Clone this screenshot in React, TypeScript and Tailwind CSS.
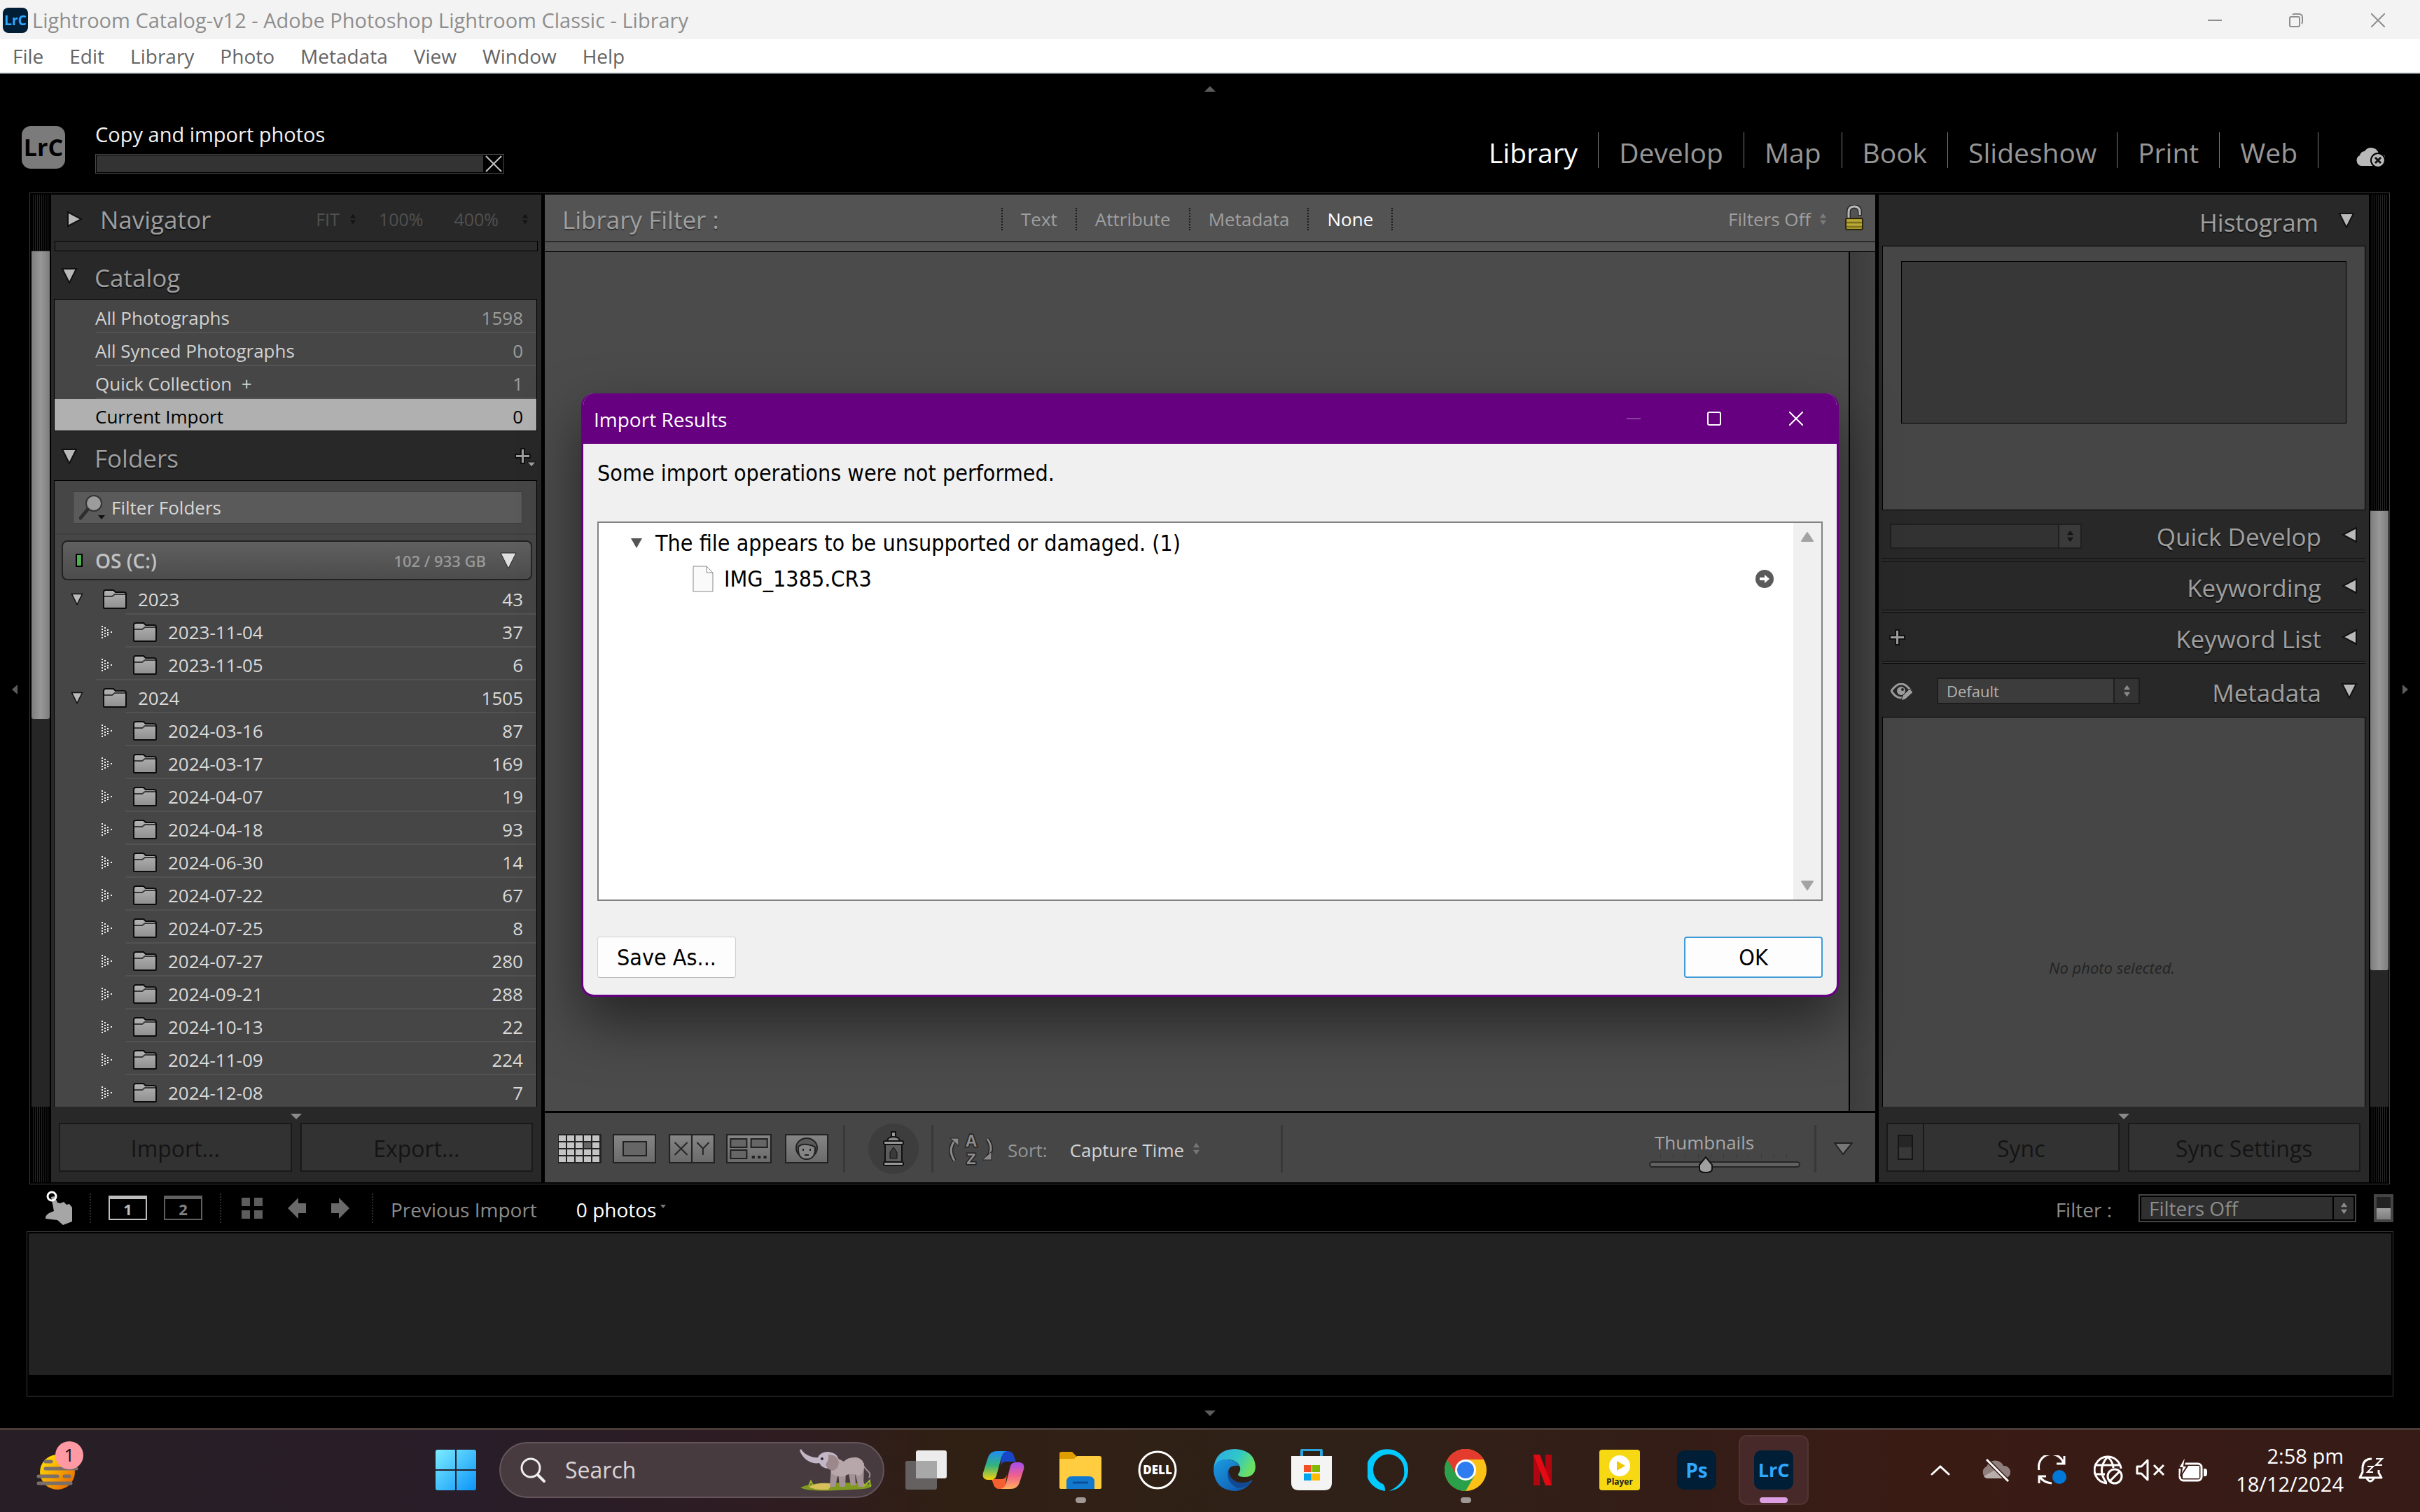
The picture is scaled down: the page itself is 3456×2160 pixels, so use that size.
import type { ReactNode } from "react"

const ridges = "bg-[repeating-linear-gradient(90deg,#000_0px,#000_2px,#242424_2px,#242424_3px)]"

const catalog = [
  { name: "All Photographs", count: "1598" },
  { name: "All Synced Photographs", count: "0" },
  { name: "Quick Collection  +", count: "1" },
  { name: "Current Import", count: "0", active: true },
]

const folders = [
  { name: "2023", count: 43, level: 1 },
  { name: "2023-11-04", count: 37, level: 2 },
  { name: "2023-11-05", count: 6, level: 2, last: true },
  { name: "2024", count: 1505, level: 1 },
  { name: "2024-03-16", count: 87, level: 2 },
  { name: "2024-03-17", count: 169, level: 2 },
  { name: "2024-04-07", count: 19, level: 2 },
  { name: "2024-04-18", count: 93, level: 2 },
  { name: "2024-06-30", count: 14, level: 2 },
  { name: "2024-07-22", count: 67, level: 2 },
  { name: "2024-07-25", count: 8, level: 2 },
  { name: "2024-07-27", count: 280, level: 2 },
  { name: "2024-09-21", count: 288, level: 2 },
  { name: "2024-10-13", count: 22, level: 2 },
  { name: "2024-11-09", count: 224, level: 2 },
  { name: "2024-12-08", count: 7, level: 2 },
]

/* ---------- small glyphs ---------- */

function Tri({ dir = "down", className = "h-6 w-6" }: { dir?: "down" | "left" | "right"; className?: string }) {
  const points = {
    down: "2,2 22,2 12,22",
    left: "22,2 22,22 3,12",
    right: "2,2 2,22 21,12",
  }
  return (
    <svg viewBox="0 0 24 24" className={`shrink-0 ${className}`}>
      <polygon points={points[dir]} fill="#b9b9b9" stroke="#111" strokeWidth="2" />
    </svg>
  )
}

function EdgeArrow({ dir, color = "#5c5c5c" }: { dir: "up" | "down" | "left" | "right"; color?: string }) {
  if (dir === "up" || dir === "down") {
    return (
      <svg viewBox="0 0 16 8" className="h-2 w-4">
        <polygon points={dir === "up" ? "0,8 16,8 8,0" : "0,0 16,0 8,8"} fill={color} />
      </svg>
    )
  }
  return (
    <svg viewBox="0 0 8 14" className="h-[14px] w-2">
      <polygon points={dir === "left" ? "8,0 8,14 0,7" : "0,0 0,14 8,7"} fill={color} />
    </svg>
  )
}

function UpDown({ color = "#8a8a8a", className = "h-5 w-[11px]" }: { color?: string; className?: string }) {
  return (
    <svg viewBox="0 0 12 20" className={`shrink-0 ${className}`}>
      <path d="M6 1l5 7H1zM6 19l5-7H1z" fill={color} />
    </svg>
  )
}

function DottedTri() {
  const dots = [
    [0, 0], [0, 4], [0, 8], [0, 12], [0, 16],
    [4, 2], [4, 6], [4, 10], [4, 14],
    [8, 5], [8, 9], [8, 12],
    [13, 8],
  ]
  return (
    <svg viewBox="0 0 16 18" className="h-[18px] w-4 shrink-0">
      {dots.map(([x, y]) => (
        <rect key={`${x}-${y}`} x={x} y={y} width="2" height="2" fill="#f0f0f0" />
      ))}
    </svg>
  )
}

function FolderIcon() {
  return (
    <svg viewBox="0 0 34 28" className="h-7 w-[34px] shrink-0">
      <defs>
        <linearGradient id="folderFill" x1="0" y1="0" x2="0" y2="1">
          <stop offset="0" stopColor="#b5b5b5" />
          <stop offset="1" stopColor="#8f8f8f" />
        </linearGradient>
      </defs>
      <path d="M1 26V4q0-3 3-3h11l3 3h12q3 0 3 3v19q0 1-1 1H2q-1 0-1-1z" fill="url(#folderFill)" stroke="#0c0c0c" strokeWidth="2" />
      <path d="M2 10h11l4-3h15" fill="none" stroke="#3a3a3a" strokeWidth="2" />
    </svg>
  )
}

function PlusIcon({ menu = false }: { menu?: boolean }) {
  return (
    <svg viewBox="0 0 30 30" className="h-[30px] w-[30px]">
      <path d="M9 1h5v8h8v5h-8v8H9v-8H1V9h8z" fill="#9d9d9d" stroke="#111" strokeWidth="2" />
      {menu && <polygon points="18,20 30,20 24,27" fill="#9d9d9d" stroke="#111" strokeWidth="1" />}
    </svg>
  )
}

function LrcTile({ className }: { className: string }) {
  return (
    <span className={`flex items-center justify-center bg-[#001e36] font-bold text-[#31a8ff] ${className}`}>LrC</span>
  )
}

/* ---------- window chrome ---------- */

function TitleBar() {
  return (
    <div className="flex h-14 shrink-0 items-center bg-[#f3f3f3] pt-0.5 pl-1">
      <LrcTile className="h-9 w-9 rounded-lg text-[19px]" />
      <h1 className="ml-1.5 text-[29px] leading-9 text-[#8e8e8e]">
        Lightroom Catalog-v12 - Adobe Photoshop Lightroom Classic - Library
      </h1>
      <div className="ml-auto flex text-[#8e8e8e]">
        <button aria-label="Minimize" className="flex h-13 w-[117px] items-center justify-center">
          <svg viewBox="0 0 20 20" className="h-5 w-5"><path d="M0 10h20" stroke="currentColor" strokeWidth="2" /></svg>
        </button>
        <button aria-label="Restore" className="flex h-13 w-[115px] items-center justify-center">
          <svg viewBox="0 0 20 20" className="h-5 w-5" fill="none" stroke="currentColor" strokeWidth="2">
            <rect x="1" y="5" width="14" height="14" rx="2" />
            <path d="M5 2q1-1 3-1h6q5 0 5 5v6q0 2-1 3" />
          </svg>
        </button>
        <button aria-label="Close" className="flex h-13 w-[120px] items-center justify-center">
          <svg viewBox="0 0 20 20" className="h-5 w-5"><path d="M0 0l20 20M20 0L0 20" stroke="currentColor" strokeWidth="2" /></svg>
        </button>
      </div>
    </div>
  )
}

function MenuBar() {
  return (
    <nav className="flex h-[49px] shrink-0 items-center gap-[37px] border-b-2 border-[#e4e8ea] bg-white pt-px pl-[18px] text-[28px] leading-9 text-[#646464]">
      {["File", "Edit", "Library", "Photo", "Metadata", "View", "Window", "Help"].map((item) => (
        <button key={item}>{item}</button>
      ))}
    </nav>
  )
}

function Header() {
  return (
    <header className="flex h-[170px] shrink-0 flex-col bg-black pt-[18px]">
      <button aria-label="Hide module picker" className="mx-auto h-2"><EdgeArrow dir="up" /></button>
      <div className="flex flex-1 items-center pt-[14px] pl-[31px]">
        <span className="flex h-[61px] w-[62px] items-center justify-center rounded-[13px] bg-[#7b7b7b] text-[34px] font-bold text-black">
          LrC
        </span>
        <div className="ml-[43px] w-[584px]">
          <div className="text-[29px] leading-10 text-[#f2f2f2]">Copy and import photos</div>
          <div className="mt-2 flex h-7 border border-[#4a4a4a]">
            <div className="m-px flex-1 bg-[#333]" />
            <button aria-label="Cancel import" className="flex w-7 items-center justify-center">
              <svg viewBox="0 0 24 24" className="h-6 w-6"><path d="M1 1l22 22M23 1L1 23" stroke="#c4c4c4" strokeWidth="2" /></svg>
            </button>
          </div>
        </div>
        <nav className="mt-2 mr-[50px] ml-auto flex items-center text-[39px] leading-[50px] text-[#969696]">
          {["Library", "Develop", "Map", "Book", "Slideshow", "Print", "Web"].map((name) => (
            <span key={name} className="flex h-[51px] items-center border-r border-[#7a7a7a] px-[29px]">
              <button className={name === "Library" ? "pt-2 text-white" : "pt-2"}>{name}</button>
            </span>
          ))}
          <button aria-label="Cloud sync" className="mt-5 ml-[53px]">
            <svg viewBox="0 0 42 30" className="h-[30px] w-[42px]">
              <path d="M8 28a8 8 0 0 1-2-15 8 8 0 0 1 7-6 11 11 0 0 1 20 4 8 8 0 0 1 4 17z" fill="#b9b9b9" />
              <circle cx="32" cy="20" r="10" fill="#b9b9b9" stroke="#000" strokeWidth="2" />
              <path d="M28 16l8 8M36 16l-8 8" stroke="#111" strokeWidth="3" />
            </svg>
          </button>
        </nav>
      </div>
    </header>
  )
}

/* ---------- side panels ---------- */

function ScrollRail({ side }: { side: "left" | "right" }) {
  return (
    <div className={side === "left" ? "mr-0.5 flex w-[26px] flex-col" : "ml-0.5 flex w-[26px] flex-col"}>
      <div className={`shrink-0 ${ridges} ${side === "left" ? "h-20" : "h-[451px]"}`} />
      <div className="flex flex-1 flex-col bg-[#262626] pt-px">
        <div className={`rounded-b-[3px] bg-linear-to-r from-[#7d7d7d] via-[#989898] to-[#7d7d7d] ${side === "left" ? "h-[668px]" : "h-[656px]"}`} />
      </div>
      <div className={`h-[108px] shrink-0 ${ridges}`} />
    </div>
  )
}

const panelTitle = "pt-1.5 text-[35px] leading-10 text-[#9f9f9f] [text-shadow:0_2px_1px_#111]"

function LeftHeader({ title, className, children }: { title: string; className: string; children?: ReactNode }) {
  return (
    <div className={`flex shrink-0 items-center pl-[14px] ${className}`}>
      <Tri />
      <h2 className={`ml-6 ${panelTitle}`}>{title}</h2>
      {children}
    </div>
  )
}

function PanelFooter({ children }: { children: ReactNode }) {
  return (
    <div className="flex h-[108px] shrink-0 flex-col pt-[10px] pr-3 pl-[11px]">
      <button aria-label="Show or hide footer" className="mx-auto h-2"><EdgeArrow dir="down" color="#8a8a8a" /></button>
      <div className="mt-[5px] flex h-[70px] gap-3">{children}</div>
    </div>
  )
}

const footerButton =
  "flex flex-1 items-center justify-center border-2 border-[#191919] bg-[#323232] pt-1 text-[32px] leading-10 text-[#141414]"

function LeftPanel() {
  return (
    <aside className="flex w-[700px] shrink-0 flex-col bg-[#282828]">
      <div className="flex h-[66px] shrink-0 items-center pr-[18px] pl-[22px]">
        <Tri dir="right" className="mt-1 h-6 w-6" />
        <h2 className={`ml-6 ${panelTitle}`}>Navigator</h2>
        <div className="ml-auto flex items-center pt-1 text-[25px] leading-8 text-[#505050]">
          <button>FIT</button>
          <UpDown color="#141414" className="mr-8 ml-[14px] h-4 w-[10px]" />
          <button className="mr-11">100%</button>
          <button>400%</button>
          <UpDown color="#141414" className="ml-[33px] h-4 w-[10px]" />
        </div>
      </div>
      <div className="mr-[5px] ml-[5px] h-[15px] shrink-0 border border-black bg-[#2b2b2b]" />

      <LeftHeader title="Catalog" className="h-[68px] pt-0.5" />
      <ul className="mr-1.5 ml-1 shrink-0 border border-black bg-[#464646] pt-px text-[26px] leading-8">
        {catalog.map((item) => (
          <li key={item.name}>
            <button
              className={`flex h-[45px] w-full items-center pt-1 pr-[19px] pl-[58px] whitespace-pre ${
                item.active ? "bg-[#b0b0b0] text-black" : "text-[#d2d2d2]"
              }`}
            >
              {item.name}
              <span className={item.active ? "ml-auto" : "ml-auto text-[#9c9c9c]"}>{item.count}</span>
            </button>
            {!item.active && <div className="ml-[59px] h-0.5 bg-[#525252]" />}
          </li>
        ))}
      </ul>

      <LeftHeader title="Folders" className="h-[70px] pt-0.5">
        <button aria-label="Add folder" className="mr-2 ml-auto pt-1.5"><PlusIcon menu /></button>
      </LeftHeader>
      <div className="mr-1.5 ml-1 min-h-0 flex-1 overflow-hidden border border-b-0 border-black bg-[#464646] text-[26px] leading-8">
        <label className="mt-[15px] mr-5 ml-[26px] flex h-[46px] items-center border border-[#3c3c3c] bg-[#5a5a5a] pl-2">
          <svg viewBox="0 0 38 36" className="h-9 w-[38px] shrink-0">
            <path d="M2 33L12 21" stroke="#2e2e2e" strokeWidth="5" strokeLinecap="round" />
            <circle cx="21" cy="12" r="11" fill="#9c9c9c" stroke="#333" strokeWidth="2" />
            <polygon points="27,29 37,29 32,35" fill="#111" />
          </svg>
          <input
            aria-label="Filter Folders"
            placeholder="Filter Folders"
            className="ml-2 min-w-0 flex-1 bg-transparent outline-none placeholder:text-[#d6d6d6]"
          />
        </label>
        <div className="mt-[14px] h-0.5 bg-[#3e3e3e]" />
        <button className="mt-2 mr-[7px] ml-[10px] flex h-[57px] w-[672px] items-center rounded-lg border-2 border-[#222] bg-linear-to-b from-[#606060] to-[#4c4c4c] pr-5 pl-[18px]">
          <span className="h-[19px] w-[10px] border-2 border-black bg-[#4caf50]" />
          <span className="ml-[18px] text-[28px] font-semibold text-[#c2c2c2]">OS (C:)</span>
          <span className="ml-auto text-[22px] font-semibold text-[#989898]">102 / 933 GB</span>
          <svg viewBox="0 0 24 24" className="ml-5 h-6 w-6"><polygon points="1,1 23,1 12,23" fill="#dedede" stroke="#222" strokeWidth="1" /></svg>
        </button>
        <ul className="mt-0.5 text-[#dadada]">
          {folders.map((folder) => (
            <li key={folder.name}>
              <button
                className={`flex h-[45px] w-full items-center pt-1 pr-[19px] ${folder.level === 1 ? "pl-[23px]" : "pl-[67px]"}`}
              >
                {folder.level === 1 ? <Tri className="h-5 w-[18px]" /> : <DottedTri />}
                <span className={folder.level === 1 ? "ml-7 flex" : "ml-[29px] flex"}><FolderIcon /></span>
                <span className="ml-4">{folder.name}</span>
                <span className="ml-auto">{folder.count}</span>
              </button>
              <div className={`h-0.5 bg-[#525252] ${folder.last ? "ml-[59px]" : "ml-[101px]"}`} />
            </li>
          ))}
        </ul>
      </div>
      <PanelFooter>
        <button className={footerButton}>Import...</button>
        <button className={footerButton}>Export...</button>
      </PanelFooter>
    </aside>
  )
}

function RightHeader({
  title,
  dir = "left",
  className,
  children,
}: {
  title: string
  dir?: "left" | "down"
  className: string
  children?: ReactNode
}) {
  return (
    <div className={`flex shrink-0 items-center ${className}`}>
      {children}
      <h2 className={`ml-auto ${panelTitle}`}>{title}</h2>
      <Tri dir={dir} className="ml-7 h-6 w-6" />
    </div>
  )
}

const rule = <div className="mx-[5px] h-1 shrink-0 border-y border-black bg-[#333]" />

function RightPanel() {
  return (
    <aside className="flex w-[700px] shrink-0 flex-col bg-[#282828]">
      <RightHeader title="Histogram" dir="down" className="h-[73px] pr-5" />
      <div className="mx-[5px] h-[378px] shrink-0 border border-black bg-[#464646] px-[26px] pt-[21px]">
        <div className="h-[232px] border border-black bg-[#373737]" />
      </div>
      <RightHeader title="Quick Develop" className="h-[69px] pr-4 pl-4">
        <div className="relative mt-1 h-9 w-[274px]">
          <select
            aria-label="Saved preset"
            className="h-full w-full appearance-none border-2 border-[#1f1f1f] bg-[#323232]"
          />
          <span className="absolute inset-y-0.5 right-0.5 flex w-8 items-center justify-center border-l-2 border-[#1f1f1f] bg-[#3a3a3a]">
            <UpDown color="#151515" />
          </span>
        </div>
      </RightHeader>
      {rule}
      <RightHeader title="Keywording" className="h-[69px] pr-4" />
      {rule}
      <RightHeader title="Keyword List" className="h-[69px] pr-4 pl-[15px]">
        <button aria-label="Add keyword" className="pt-2"><PlusIcon /></button>
      </RightHeader>
      {rule}
      <RightHeader title="Metadata" dir="down" className="h-[76px] pt-0.5 pr-4 pl-[17px]">
        <button aria-label="Customize metadata" className="flex pt-1">
          <svg viewBox="0 0 32 26" className="h-[26px] w-8">
            <path d="M1 11Q8 1 15 1t14 10q-6 10-14 10T1 11z" fill="none" stroke="#9d9d9d" strokeWidth="3" />
            <circle cx="15" cy="11" r="6" fill="#9d9d9d" />
            <circle cx="17" cy="9" r="2" fill="#282828" />
            <path d="M15 25l2-7L27 8l5 5-11 10z" fill="#9d9d9d" stroke="#222" strokeWidth="1" />
          </svg>
        </button>
        <div className="relative ml-[34px] h-[38px] w-[290px]">
          <select
            aria-label="Metadata set"
            className="h-full w-full appearance-none border-2 border-[#1c1c1c] bg-[#3c3c3c] pl-3 text-[22px] leading-7 text-[#b2b2b2]"
          >
            <option>Default</option>
          </select>
          <span className="pointer-events-none absolute inset-y-0.5 right-0.5 flex w-9 items-center justify-center border-l-2 border-[#1f1f1f] bg-[#333]">
            <UpDown />
          </span>
        </div>
      </RightHeader>
      <div className="mx-[5px] flex min-h-0 flex-1 flex-col items-center border border-b-0 border-black bg-[#464646] pt-[343px]">
        <p className="mr-[34px] text-[22px] leading-7 text-[#232323] italic">No photo selected.</p>
      </div>
      <PanelFooter>
        <div className="flex flex-1 border-2 border-[#191919] bg-[#323232]">
          <button aria-label="Auto sync" className="flex w-[52px] items-center justify-center border-r-2 border-[#191919]">
            <span className="flex h-9 w-[22px] flex-col justify-end border-2 border-[#161616] bg-[#262626]">
              <span className="h-4 bg-[#383838]" />
            </span>
          </button>
          <button className="flex-1 pt-1 text-[32px] leading-10 text-[#141414]">Sync</button>
        </div>
        <button className={footerButton}>Sync Settings</button>
      </PanelFooter>
    </aside>
  )
}

/* ---------- centre ---------- */

function FilterBar() {
  const tabs = ["Text", "Attribute", "Metadata", "None"]
  return (
    <div className="shrink-0">
      <div className="flex h-[67px] items-center bg-[#535353] pt-0.5 text-[26px] leading-8 text-[#9f9f9f] [text-shadow:0_2px_1px_#333]">
        <h2 className="w-[652px] pt-0.5 pl-[25px] text-[35px] leading-10">Library Filter :</h2>
        <div className="flex border-l-2 border-dotted border-[#1a1a1a]">
          {tabs.map((tab) => (
            <button
              key={tab}
              className={`border-r-2 border-dotted border-[#1a1a1a] px-[26px] ${tab === "None" ? "text-white" : ""}`}
            >
              {tab}
            </button>
          ))}
        </div>
        <button className="ml-auto">Filters Off</button>
        <UpDown color="#7b7b7b" className="ml-3 h-5 w-[11px]" />
        <button aria-label="Lock filters" className="mr-4 ml-[25px] flex pb-1">
          <svg viewBox="0 0 28 36" className="h-9 w-7">
            <path d="M6 20V10q0-8 8-8t8 8v5" fill="none" stroke="#2b2b2b" strokeWidth="6" />
            <path d="M6 20V10q0-8 8-8t8 8v4" fill="none" stroke="#b9b9b9" strokeWidth="3" />
            <rect x="2" y="19" width="24" height="16" rx="2" fill="#a8982c" stroke="#2e2808" strokeWidth="2" />
            <path d="M3 22h22M3 28h22" stroke="#b9aa3c" strokeWidth="2" />
            <path d="M3 25h22M3 31h22" stroke="#7f711a" strokeWidth="2" />
          </svg>
        </button>
      </div>
      <div className="h-[15px] border-y border-black bg-[#535353]" />
    </div>
  )
}

function ViewButton({ label, className, children }: { label: string; className: string; children: ReactNode }) {
  return (
    <button aria-label={label} className={`flex ${className}`}>
      <svg viewBox="0 0 62 42" preserveAspectRatio="none" className="h-[42px] w-full">
        <defs>
          <linearGradient id="viewFill" x1="0" y1="0" x2="0" y2="1">
            <stop offset="0" stopColor="#868686" />
            <stop offset="1" stopColor="#6a6a6a" />
          </linearGradient>
        </defs>
        {children}
      </svg>
    </button>
  )
}

function Toolbar() {
  const frame = <rect x="1" y="1" width="60" height="40" fill="url(#viewFill)" stroke="#222" strokeWidth="2" />
  return (
    <div className="flex h-[102px] shrink-0 items-center border-t-[3px] border-black bg-[#464646] pt-0.5 pl-[19px] text-[26px] leading-8">
      <ViewButton label="Grid view" className="w-[62px]">
        <rect width="62" height="42" fill="#222" />
        {[0, 1, 2, 3].map((r) =>
          [0, 1, 2, 3, 4].map((c) => (
            <rect key={`${r}-${c}`} x={1 + c * 12} y={2 + r * 10} width="10" height="8" fill={r === 1 && c === 3 ? "#666" : "#c4c4c4"} />
          )),
        )}
      </ViewButton>
      <ViewButton label="Loupe view" className="ml-4 w-[62px]">
        {frame}
        <rect x="15" y="11" width="33" height="20" fill="#666" stroke="#222" strokeWidth="2" />
      </ViewButton>
      <ViewButton label="Compare view" className="ml-[18px] w-[66px]">
        {frame}
        <path d="M31 1v40" stroke="#222" strokeWidth="2" />
        <path d="M8 12l17 18M25 12L8 30M38 12l8 9 8-9M46 21v9" stroke="#2a2a2a" strokeWidth="2" fill="none" />
      </ViewButton>
      <ViewButton label="Survey view" className="ml-4 w-[65px]">
        {frame}
        <g fill="#666" stroke="#222" strokeWidth="2">
          <rect x="6" y="7" width="22" height="12" />
          <rect x="34" y="7" width="22" height="12" />
          <rect x="6" y="23" width="22" height="12" />
        </g>
        <path d="M35 33h4M43 33h4M51 33h4" stroke="#222" strokeWidth="4" />
      </ViewButton>
      <ViewButton label="People view" className="ml-[19px] w-[62px]">
        {frame}
        <ellipse cx="31" cy="20" rx="15" ry="14" fill="#5a5a5a" stroke="#222" strokeWidth="2" />
        <path d="M19 19q3-5 12-4t12 4q1 17-12 17T19 19z" fill="#858585" stroke="#222" strokeWidth="2" />
        <path d="M26 21v3M36 21v3M28 30h6" stroke="#222" strokeWidth="2" />
      </ViewButton>
      <div className="ml-[21px] h-[68px] w-[3px] bg-[#383838]" />
      <button aria-label="Painter" className="ml-[33px] flex h-[72px] w-[72px] items-center justify-center rounded-full bg-[#3d3d3d]">
        <svg viewBox="0 0 30 50" className="h-[50px] w-[30px]" stroke="#111" strokeWidth="2">
          <path d="M12 1h6v8h-6z" fill="#999" />
          <path d="M6 15q0-7 9-7t9 7z" fill="#8a8a8a" />
          <rect x="3" y="18" width="24" height="28" fill="#5c5c5c" />
          <rect x="1" y="14" width="28" height="5" rx="2" fill="#9a9a9a" />
          <rect x="1" y="44" width="28" height="5" rx="2" fill="#9a9a9a" />
          <path d="M15 23l5 7v9H10v-9z" fill="#3a3a3a" strokeWidth="1" />
        </svg>
      </button>
      <div className="ml-[18px] h-[68px] w-[3px] bg-[#383838]" />
      <button aria-label="Sort direction" className="ml-[22px] flex">
        <svg viewBox="0 0 64 46" className="h-[46px] w-16 overflow-visible">
          <g fill="none" stroke="#222" strokeWidth="6"><path d="M8 40Q-2 24 9 11M55 9q10 14 0 27" /></g>
          <g fill="none" stroke="#8a8a8a" strokeWidth="3"><path d="M8 40Q-2 24 9 11M55 9q10 14 0 27" /></g>
          <path d="M2 8h12v11zM48 39h13V27z" fill="#8a8a8a" stroke="#222" strokeWidth="1" />
          <g
            fill="#8f8f8f"
            stroke="#222"
            strokeWidth="3"
            paintOrder="stroke"
            fontFamily="Liberation Sans, sans-serif"
            fontWeight="700"
            textAnchor="middle"
          >
            <text x="32" y="20" fontSize="23">A</text>
            <text x="32" y="45" fontSize="22">Z</text>
          </g>
        </svg>
      </button>
      <label htmlFor="sort" className="ml-5 pt-1 text-[#969696]">Sort:</label>
      <select id="sort" className="ml-8 w-[165px] appearance-none bg-transparent pt-1 text-[#d4d4d4]">
        <option>Capture Time</option>
      </select>
      <UpDown color="#777" className="ml-[10px] h-5 w-[11px]" />
      <div className="ml-[115px] h-[68px] w-[3px] bg-[#383838]" />
      <div className="mt-2 ml-auto w-[216px]">
        <label htmlFor="thumb-size" className="block pl-2 leading-8 text-[#a8a8a8]">Thumbnails</label>
        <div className="relative h-[26px]">
          <div className="mx-4 h-[7px] bg-[repeating-linear-gradient(90deg,#3a3a3a_0px,#3a3a3a_1px,transparent_1px,transparent_18px)]" />
          <div className="mt-1 h-[9px] rounded-full border-2 border-[#262626] bg-[#606060]" />
          <svg viewBox="0 0 22 24" className="absolute top-1 left-[70px] h-6 w-[22px]">
            <path d="M11 1l9 11v6q0 5-9 5t-9-5v-6z" fill="#a0a0a0" stroke="#111" strokeWidth="2" />
          </svg>
          <input id="thumb-size" type="range" defaultValue={37} className="absolute inset-0 w-full opacity-0" />
        </div>
      </div>
      <div className="ml-5 h-[68px] w-[3px] bg-[#383838]" />
      <button aria-label="Toolbar options" className="mr-8 ml-[25px]">
        <svg viewBox="0 0 27 18" className="h-[18px] w-[27px]"><polygon points="1,1 26,1 13,17" fill="#777" stroke="#222" strokeWidth="2" /></svg>
      </button>
    </div>
  )
}

function Workspace() {
  return (
    <main className="flex min-h-0 flex-1 bg-black">
      <button aria-label="Hide left panel" className="flex w-[42px] shrink-0 items-center justify-center pt-0.5"><EdgeArrow dir="left" /></button>
      <div className="flex min-w-0 flex-1 border border-[#3a3a3a] py-0.5 pr-px pl-0.5">
        <ScrollRail side="left" />
        <LeftPanel />
        <section className="mx-[5px] flex min-w-0 flex-1 flex-col">
          <FilterBar />
          <div className="flex min-h-0 flex-1 bg-[#4b4b4b]">
            <div className="ml-auto w-[38px] border-l-2 border-black bg-linear-to-r from-[#3c3c3c] to-[#434343]" />
          </div>
          <Toolbar />
        </section>
        <RightPanel />
        <ScrollRail side="right" />
      </div>
      <button aria-label="Hide right panel" className="flex w-[43px] shrink-0 items-center justify-center pt-0.5"><EdgeArrow dir="right" /></button>
    </main>
  )
}

/* ---------- filmstrip ---------- */

function ScreenButton({ n, className }: { n: string; className: string }) {
  return (
    <button className={`flex h-[35px] w-[55px] items-center justify-center border-2 border-t-[5px] text-[22px] leading-6 font-bold ${className}`}>
      {n}
    </button>
  )
}

function Filmstrip() {
  const divider = "h-[42px] border-l-2 border-dotted border-[#2e2e2e]"
  return (
    <section className="flex shrink-0 flex-col bg-black text-[28px] leading-9 text-[#8c8c8c]">
      <div className="flex h-[67px] items-center pr-[38px] pl-16">
        <svg viewBox="0 0 40 50" className="h-[50px] w-10">
          <path d="M9 9l4 20-7 3q-6 4-5 8l17 2 8 7 13-5V24l-4-5-4 1-4-4-5 2-4-1-4-9z" fill="#a6a6a6" />
          <circle cx="10" cy="8" r="6" fill="none" stroke="#fff" strokeWidth="3" />
        </svg>
        <div className={`ml-6 ${divider}`} />
        <ScreenButton n="1" className="ml-[25px] border-[#bdbdbd] text-[#bdbdbd]" />
        <ScreenButton n="2" className="ml-6 border-[#606060] text-[#808080]" />
        <div className={`ml-[25px] ${divider}`} />
        <button aria-label="Grid" className="ml-[29px]">
          <svg viewBox="0 0 30 30" className="h-[30px] w-[30px]" fill="#5d5d5d">
            <path d="M0 0h12v12H0zM18 0h12v12H18zM0 18h12v12H0zM18 18h12v12H18z" />
          </svg>
        </button>
        <button aria-label="Back" className="ml-9">
          <svg viewBox="0 0 26 30" className="h-[30px] w-[26px]" fill="#6a6a6a"><path d="M0 15L15 0v8h11v14H15v8z" /></svg>
        </button>
        <button aria-label="Forward" className="ml-9">
          <svg viewBox="0 0 26 30" className="h-[30px] w-[26px]" fill="#6a6a6a"><path d="M26 15L11 0v8H0v14h11v8z" /></svg>
        </button>
        <div className={`ml-8 ${divider}`} />
        <span className="ml-[25px] pt-1">Previous Import</span>
        <button className="ml-14 flex items-center gap-1.5 pt-1 text-white">
          0 photos
          <svg viewBox="0 0 8 5" className="mb-2 h-[5px] w-2"><polygon points="0,0 8,0 4,5" fill="#777" /></svg>
        </button>
        <label htmlFor="filter" className="mr-[38px] ml-auto pt-1">Filter :</label>
        <div className="relative h-10 w-[311px]">
          <select
            id="filter"
            className="h-full w-full appearance-none border-2 border-[#454545] bg-[#2f2f2f] pl-[13px] leading-8 outline-2 -outline-offset-4 outline-black"
          >
            <option>Filters Off</option>
          </select>
          <span className="pointer-events-none absolute inset-y-1 right-1 flex w-[30px] items-center justify-center border-l-2 border-black bg-[#2f2f2f]">
            <UpDown />
          </span>
        </div>
        <button aria-label="Filter switch" className="ml-[25px] flex h-10 w-7 flex-col justify-end border-4 border-[#454545] bg-[#222]">
          <span className="block h-4 w-full bg-linear-to-b from-[#a0a0a0] to-[#7d7d7d]" />
        </button>
      </div>
      <div className="mx-[38px] h-[236px] border border-[#3a3a3a] px-0.5 pt-0.5">
        <div className="h-[202px] bg-[#222]" />
      </div>
      <button aria-label="Hide filmstrip" className="mx-auto mt-5 mb-[17px] h-2"><EdgeArrow dir="down" /></button>
    </section>
  )
}

/* ---------- dialog ---------- */

function ImportResults() {
  return (
    <div
      role="dialog"
      aria-labelledby="dialog-title"
      className="flex w-[1796px] flex-col overflow-hidden rounded-[18px] border-[3px] border-t-0 border-[#660080] bg-[#f0f0f0] text-[32px] leading-10 text-black shadow-[0_36px_80px_rgba(0,0,0,0.5)] [font-family:'DejaVu_Sans_Condensed','DejaVu_Sans',sans-serif]"
    >
      <div className="flex h-[72px] items-center bg-[#660080] pl-[15px] text-white">
        <h2 id="dialog-title" className="pt-0.5 text-[28px] leading-9 [font-family:'Open_Sans',sans-serif]">Import Results</h2>
        <div className="ml-auto flex">
          <button aria-label="Minimize" disabled className="flex h-[72px] w-[115px] items-center justify-center text-[#8b3fa0]">
            <svg viewBox="0 0 20 20" className="h-5 w-5"><path d="M0 10h20" stroke="currentColor" strokeWidth="2" /></svg>
          </button>
          <button aria-label="Maximize" className="flex h-[72px] w-[116px] items-center justify-center">
            <svg viewBox="0 0 20 20" className="h-5 w-5"><rect x="1" y="1" width="18" height="18" rx="2" fill="none" stroke="currentColor" strokeWidth="2" /></svg>
          </button>
          <button aria-label="Close" className="flex h-[72px] w-[117px] items-center justify-center">
            <svg viewBox="0 0 20 20" className="h-5 w-5"><path d="M0 0l20 20M20 0L0 20" stroke="currentColor" strokeWidth="2" /></svg>
          </button>
        </div>
      </div>
      <div className="px-5 pt-[22px] pb-6">
        <p>Some import operations were not performed.</p>
        <div className="mt-[49px] flex h-[542px] border-2 border-[#828282] bg-white">
          <ul className="flex-1 pt-[3px]">
            <li className="flex h-[51px] items-center pl-[46px]">
              <svg viewBox="0 0 16 14" className="h-[14px] w-4"><polygon points="0,0 16,0 8,14" fill="#555" /></svg>
              <span className="ml-[19px]">The file appears to be unsupported or damaged. (1)</span>
            </li>
            <li className="flex h-[51px] items-center pr-7 pl-[134px]">
              <svg viewBox="0 0 30 38" className="h-[38px] w-[30px]">
                <path d="M1 1h19l9 9v27H1z" fill="#fafafa" stroke="#888" strokeWidth="1" />
                <path d="M20 1v9h9" fill="none" stroke="#888" strokeWidth="1" />
              </svg>
              <span className="ml-[15px]">IMG_1385.CR3</span>
              <button aria-label="Show in Explorer" className="ml-auto">
                <svg viewBox="0 0 26 26" className="h-[26px] w-[26px]">
                  <circle cx="13" cy="13" r="13" fill="#5a5a5a" />
                  <path d="M6 11h7V7l7 6-7 6v-4H6z" fill="#fff" />
                </svg>
              </button>
            </li>
          </ul>
          <div className="flex w-10 flex-col items-center justify-between bg-[#f0f0f0] py-[13px]">
            <svg viewBox="0 0 20 14" className="h-[14px] w-5"><path d="M10 1l8 12H2z" fill="#a3a3a3" stroke="#a3a3a3" strokeWidth="2" strokeLinejoin="round" /></svg>
            <svg viewBox="0 0 20 14" className="h-[14px] w-5"><path d="M10 13L2 1h16z" fill="#a3a3a3" stroke="#a3a3a3" strokeWidth="2" strokeLinejoin="round" /></svg>
          </div>
        </div>
        <div className="mt-[51px] flex justify-between">
          <button className="h-[59px] w-[198px] rounded-sm border border-[#d0d0d0] border-b-[#b5b5b5] bg-[#fdfdfd]">Save As...</button>
          <button className="h-[59px] w-[198px] rounded-sm border-2 border-[#3f9ad6] bg-[#fdfdfd]">OK</button>
        </div>
      </div>
    </div>
  )
}

/* ---------- taskbar ---------- */

function Elephant() {
  return (
    <svg viewBox="0 0 106 60" className="h-[60px] w-[106px] shrink-0">
      <path d="M2 55q14-7 40-6 34-3 62 2 0 5-12 6t-38 2q-42 2-52-4z" fill="#7f9a1e" />
      <path d="M14 54q16-8 34-4l-6 8q-20 1-28-4z" fill="#d9bf5a" />
      <path d="M14 53l3-7 3 6M86 54l5-8 2 7 8-8 1 9" stroke="#9cba2c" strokeWidth="2" fill="none" />
      {/* tail and legs */}
      <path d="M90 20q4 8 9 12 4 4 1 9" fill="none" stroke="#a08d90" strokeWidth="2" />
      <path d="M46 26l-2 28h8l4-20 2 20h8l1-22zM70 28l4 24h7l-1-18 5 20h7l1-34z" fill="#a59296" />
      {/* body, head and trunk */}
      <path d="M44 10q14 4 20 8 6-7 18-6 11 2 11 14-1 10-8 12-12-5-20 1-12 2-19-5z" fill="#b8a7aa" />
      <path d="M3 0q3 6 12 10 8 3 12 2 4-8 14-8 14 1 16 12-2 10-14 12-10 0-14-8-10 2-19-5Q4 10 1 2z" fill="#c3b6c6" />
      <path d="M42 8q13 0 15 11-1 10-9 12-8-2-10-9 5-6 4-14z" fill="#9c878b" />
      <circle cx="33" cy="14" r="2" fill="#2b2733" />
    </svg>
  )
}

const apps: { name: string; running?: boolean; icon: ReactNode }[] = [
  {
    name: "Task view",
    icon: (
      <svg viewBox="0 0 60 60" className="h-[60px] w-[60px]">
        <rect x="15" y="2" width="44" height="40" rx="3" fill="#ececec" />
        <rect x="0" y="17" width="45" height="41" rx="3" fill="#6b6b6b" fillOpacity="0.88" />
        <rect x="15" y="17" width="30" height="25" fill="#a8a8a8" />
      </svg>
    ),
  },
  {
    name: "Copilot",
    icon: (
      <svg viewBox="0 0 60 60" className="h-[60px] w-[60px]">
        <defs>
          <linearGradient id="copA" x1="0" y1="0" x2="0" y2="1">
            <stop offset="0" stopColor="#1f8df5" /><stop offset="0.5" stopColor="#34b37c" /><stop offset="1" stopColor="#f3d20e" />
          </linearGradient>
          <linearGradient id="copB" x1="0" y1="0" x2="0" y2="1">
            <stop offset="0" stopColor="#a44df0" /><stop offset="0.5" stopColor="#f0608c" /><stop offset="1" stopColor="#ffb05c" />
          </linearGradient>
        </defs>
        <path d="M28 3h8q7 0 9 7l3 8H34q-6 0-8 6z" fill="#1746c8" />
        <path d="M32 57h-8q-6 0-8-6l-3-8h14q6 0 8-6z" fill="#f4602f" />
        <path d="M21 3h14q-6 1-8 9l-7 26q-2 6-8 6H7q-8-1-6-10l7-22q3-9 13-9z" fill="url(#copA)" />
        <path d="M40 57H26q6-1 8-9l6-24q2-5 8-5h5q8 1 6 10l-6 19q-3 9-13 9z" fill="url(#copB)" />
      </svg>
    ),
  },
  {
    name: "File Explorer",
    running: true,
    icon: (
      <svg viewBox="0 0 60 60" className="h-[60px] w-[60px]">
        <path d="M0 7q0-3 3-3h15l6 6v8H0z" fill="#e09d00" />
        <path d="M0 14h21l4-4h32q3 0 3 3v42q0 2-2 2H2q-2 0-2-2z" fill="#ffcd3f" />
        <path d="M10 57V47q0-8 8-8h24q8 0 8 8v10z" fill="#1279cf" />
        <path d="M19 48h22" stroke="#0b4f96" strokeWidth="3" />
      </svg>
    ),
  },
  {
    name: "Dell",
    icon: (
      <svg viewBox="0 0 60 60" className="h-[60px] w-[60px]">
        <circle cx="30" cy="30" r="26" fill="none" stroke="#fff" strokeWidth="3" />
        <text x="30" y="36" fontSize="17" fontWeight="800" textAnchor="middle" fill="#fff">DELL</text>
      </svg>
    ),
  },
  {
    name: "Edge",
    icon: (
      <svg viewBox="0 0 60 60" className="h-[60px] w-[60px]">
        <defs>
          <linearGradient id="edgeTop" x1="0" y1="0" x2="1" y2="0.4">
            <stop offset="0" stopColor="#2fa8e8" /><stop offset="0.6" stopColor="#30c8c8" /><stop offset="1" stopColor="#6be063" />
          </linearGradient>
          <linearGradient id="edgeBody" x1="0" y1="0" x2="1" y2="1">
            <stop offset="0" stopColor="#1b9de2" /><stop offset="1" stopColor="#0f4fa8" />
          </linearGradient>
        </defs>
        <path d="M0 28Q3 0 31 0q28 2 29 26-1 14-16 14-9 0-9-4 4-4 3-10-3-9-15-11Q6 14 0 28z" fill="url(#edgeTop)" />
        <path d="M0 30q2-15 18-15 14 0 19 9-16-2-16 10 1 14 18 15 8 0 17-5Q47 60 29 60 2 58 0 30z" fill="url(#edgeBody)" />
        <path d="M21 30q-4 18 14 26 12 0 20-10-30 8-34-16z" fill="#114a93" />
      </svg>
    ),
  },
  {
    name: "Microsoft Store",
    icon: (
      <svg viewBox="0 0 60 60" className="h-[60px] w-[60px]">
        <path d="M16 14V3q0-2 2-2h24q2 0 2 2v11" fill="none" stroke="#2aa4dd" strokeWidth="4" />
        <path d="M1 10h58v38q0 11-11 11H12Q1 59 1 48z" fill="#f4f4f4" />
        <path d="M19 23h11v10H19z" fill="#f25022" /><path d="M31 23h11v10H31z" fill="#7fba00" />
        <path d="M19 35h11v10H19z" fill="#00a4ef" /><path d="M31 35h11v10H31z" fill="#ffb900" />
      </svg>
    ),
  },
  {
    name: "Alexa",
    icon: (
      <svg viewBox="0 0 60 60" className="h-[60px] w-[60px]">
        <path d="M25 60A30 30 0 1 1 31 60q24-12 21-30A22 22 0 1 0 22 50q3 2 3 10z" fill="#00caff" />
      </svg>
    ),
  },
  {
    name: "Chrome",
    running: true,
    icon: (
      <svg viewBox="0 0 60 60" className="h-[60px] w-[60px]">
        <circle cx="30" cy="30" r="30" fill="#fbc116" />
        <path d="M30 30L4 15A30 30 0 0 0 30 60l13-22z" fill="#2aa04a" />
        <path d="M4 15a30 30 0 0 1 52 0H30L17 37z" fill="#e33b2e" />
        <circle cx="30" cy="30" r="15" fill="#fff" />
        <circle cx="30" cy="30" r="12" fill="#2f7cf0" />
      </svg>
    ),
  },
  {
    name: "Netflix",
    icon: (
      <svg viewBox="0 0 26 44" className="h-11 w-[26px]">
        <path d="M0 0h9v44H0zM17 0h9v44h-9z" fill="#b1060f" />
        <path d="M0 0h9l17 44h-9z" fill="#e50914" />
      </svg>
    ),
  },
  {
    name: "Player",
    icon: (
      <span className="flex h-[58px] w-[58px] flex-col items-center rounded-sm bg-[#f6d912] pt-2">
        <svg viewBox="0 0 30 30" className="h-[30px] w-[30px]">
          <circle cx="15" cy="15" r="15" fill="#fff" />
          <path d="M11 8l12 7-12 7z" fill="#f0c800" />
        </svg>
        <span className="text-[12px] leading-4 font-bold text-[#222]">Player</span>
      </span>
    ),
  },
  {
    name: "Photoshop",
    icon: (
      <span className="flex h-14 w-14 items-center justify-center rounded-[10px] bg-[#001e36] text-[28px] font-bold text-[#31a8ff]">
        Ps
      </span>
    ),
  },
]

function Taskbar() {
  return (
    <footer className="flex h-[120px] shrink-0 items-center border-t-[3px] border-[#4a3c38] bg-[linear-gradient(90deg,#281f26_0%,#281d28_20%,#2f1c21_33%,#301f13_39%,#2f2118_55%,#341d17_68%,#3a1b14_80%,#361b17_100%)] pb-[3px] text-white">
      <button aria-label="Weather" className="flex w-[606px] shrink-0 pl-[51px]">
        <svg viewBox="0 0 72 72" className="mb-3 h-[72px] w-[72px]">
          <defs>
            <linearGradient id="sun" x1="0" y1="0" x2="1" y2="1">
              <stop offset="0.2" stopColor="#ffd000" /><stop offset="1" stopColor="#e65a00" />
            </linearGradient>
          </defs>
          <circle cx="31" cy="45" r="25" fill="url(#sun)" />
          <g stroke="#7a6f6a" strokeWidth="5" strokeLinecap="round">
            <path d="M14 30h8M14 40h44M4 51h27M41 51h7M4 61h46" />
          </g>
          <circle cx="48" cy="21" r="20" fill="#ff99a4" />
          <text x="48" y="30" fontSize="26" textAnchor="middle" fill="#111">1</text>
        </svg>
      </button>
      <button aria-label="Start" className="flex w-[90px] shrink-0 justify-center">
        <svg viewBox="0 0 58 58" className="h-[58px] w-[58px]">
          <defs>
            <linearGradient id="win" x1="0" y1="0" x2="1" y2="1">
              <stop offset="0" stopColor="#7cecff" /><stop offset="1" stopColor="#0a94f8" />
            </linearGradient>
          </defs>
          <path d="M3 0h25v28H0V3q0-3 3-3zM30 0h25q3 0 3 3v25H30zM0 30h28v28H3q-3 0-3-3zM30 30h28v25q0 3-3 3H30z" fill="url(#win)" />
        </svg>
      </button>
      <label className="mr-[5px] ml-[17px] flex h-20 w-[550px] shrink-0 items-center rounded-full border-2 border-[#63555a] bg-[#483b40] pr-[14px] pl-[27px]">
        <svg viewBox="0 0 38 38" className="h-[38px] w-[38px] shrink-0" fill="none" stroke="#eee" strokeLinecap="round">
          <circle cx="16" cy="16" r="13" strokeWidth="3" />
          <path d="M26 26l9 9" strokeWidth="4" />
        </svg>
        <input aria-label="Search" placeholder="Search" className="ml-[27px] min-w-0 flex-1 bg-transparent text-[32px] leading-10 outline-none placeholder:text-[#d9d3d5]" />
        <Elephant />
      </label>
      {apps.map((app) => (
        <button key={app.name} aria-label={app.name} className="relative flex h-full w-[110px] shrink-0 items-center justify-center">
          {app.icon}
          {app.running && <span className="absolute bottom-[10px] h-2 w-[15px] rounded-full bg-[#a19795]" />}
        </button>
      ))}
      <button aria-label="Lightroom Classic" className="relative mx-[5px] flex h-[100px] w-[100px] shrink-0 items-center justify-center rounded-xl border-2 border-[#53332f] bg-[#48292a]">
        <LrcTile className="h-14 w-14 rounded-[10px] text-[27px]" />
        <span className="absolute bottom-px h-2 w-10 rounded-full bg-[#dd9fe2]" />
      </button>

      <div className="mr-[51px] ml-auto flex items-center text-[29px] leading-10">
        <button aria-label="Hidden icons" className="flex w-20 justify-center">
          <svg viewBox="0 0 28 16" className="h-4 w-7"><path d="M2 14L14 3l12 11" fill="none" stroke="#fff" strokeWidth="3" strokeLinecap="round" /></svg>
        </button>
        <button aria-label="OneDrive" className="flex w-20 justify-center">
          <svg viewBox="0 0 42 34" className="h-[34px] w-[42px]">
            <path d="M9 29a9 9 0 0 1-2-17A13 13 0 0 1 31 11a9 9 0 0 1 2 18z" fill="#8f7f7c" />
            <path d="M9 29q-4 0-6-3l18-10 14 12-3 1z" fill="#b8aeab" />
            <path d="M7 2l31 31" stroke="#3a1b15" strokeWidth="6" /><path d="M7 2l31 31" stroke="#fff" strokeWidth="3" />
          </svg>
        </button>
        <button aria-label="Sync status" className="flex w-20 justify-center">
          <svg viewBox="0 0 42 42" className="h-[42px] w-[42px]" fill="none" stroke="#fff" strokeWidth="3">
            <path d="M2 21A18 18 0 0 1 37 12M38 1v11H27M2 40V30h10M3 31q6 8 17 9" />
            <circle cx="31" cy="31" r="10" fill="#0078d7" stroke="none" />
          </svg>
        </button>
        <button aria-label="Network, sound and battery" className="ml-[10px] flex items-center">
          <svg viewBox="0 0 42 42" className="mx-[9px] h-[42px] w-[42px]" fill="none" stroke="#fff" strokeWidth="3">
            <path d="M19 40A19 19 0 1 1 39 19M3 14h35M3 27h13M20 2q-16 18-2 37M20 2q8 8 8 16" />
            <circle cx="30" cy="30" r="10" />
            <path d="M23 37l14-14" />
          </svg>
          <svg viewBox="0 0 42 34" className="mx-[9px] h-[34px] w-[42px]" fill="none" stroke="#fff" strokeWidth="3">
            <path d="M2 12h6l9-9v28l-9-9H2zM26 10l14 14M40 10L26 24" strokeLinejoin="round" />
          </svg>
          <svg viewBox="0 0 42 36" className="mx-[9px] h-9 w-[42px]">
            <rect x="3" y="9" width="31" height="24" rx="5" fill="none" stroke="#fff" strokeWidth="3" />
            <path d="M12 12h19v18H7V20z" fill="#fff" />
            <path d="M37 16h2q3 0 3 4v3q0 4-3 4h-2z" fill="#fff" />
            <path d="M9 1L1 15h5l-2 12 10-15H9l2-11z" fill="#fff" stroke="#3a1b15" strokeWidth="2" />
          </svg>
        </button>
        <button className="ml-8 text-right whitespace-nowrap">
          <span className="block">2:58 pm</span>
          <span className="block">18/12/2024</span>
        </button>
        <button aria-label="Notifications" className="ml-5 flex">
          <svg viewBox="0 0 38 38" className="h-[38px] w-[38px]" fill="none" stroke="#fff" strokeWidth="3">
            <path d="M20 3Q8 3 7 15v7l-4 8h31l-4-7v-4M13 31q5 8 10 0" strokeLinejoin="round" />
            <path d="M14 14h8l-8 8h8M26 3h9l-9 9h9" strokeWidth="2" />
          </svg>
        </button>
      </div>
    </footer>
  )
}

export default function App() {
  return (
    <div className="relative flex h-screen flex-col overflow-hidden bg-black [font-family:'Open_Sans','Noto_Sans',sans-serif]">
      <TitleBar />
      <MenuBar />
      <Header />
      <Workspace />
      <Filmstrip />
      <Taskbar />
      <div className="absolute inset-x-0 top-[562px] flex justify-center">
        <ImportResults />
      </div>
    </div>
  )
}
